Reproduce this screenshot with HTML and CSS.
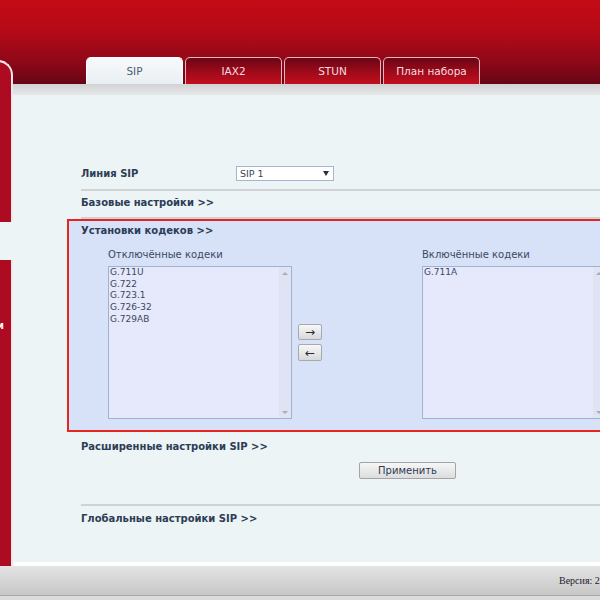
FILE: index.html
```html
<!DOCTYPE html>
<html lang="ru">
<head>
<meta charset="utf-8">
<title>SIP</title>
<link rel="stylesheet" href="styles.css">
</head>
<body>
<div class="page">
  <header class="top">
    <nav class="tabs">
      <div class="tab active">SIP</div>
      <div class="tab">IAX2</div>
      <div class="tab">STUN</div>
      <div class="tab">План набора</div>
    </nav>
  </header>
  <div class="main">
    <aside class="side">
      <div class="side-gap"></div>
      <div class="side-item active"></div>
      <div class="side-item text"><span>Сетевой режим</span></div>
    </aside>
    <div class="work">
      <div class="strip"></div>
      <div class="content">
        <div class="line-row">
          <span class="label">Линия SIP</span>
          <div class="select"><span>SIP 1</span><i class="caret"></i></div>
        </div>
        <div class="rule"></div>
        <div class="sect first">Базовые настройки &gt;&gt;</div>
        <div class="rule"></div>
        <section class="codecs">
          <div class="codecs-title">Установки кодеков &gt;&gt;</div>
          <div class="codec-grid">
            <div class="col-label left">Отключённые кодеки</div>
            <div class="col-label right">Включённые кодеки</div>
            <div class="listbox left">
              <div class="items">
                <div>G.711U</div>
                <div>G.722</div>
                <div>G.723.1</div>
                <div>G.726-32</div>
                <div>G.729AB</div>
              </div>
              <div class="sbar"><i class="up"></i><i class="down"></i></div>
            </div>
            <div class="arrows">
              <button class="arrow-btn">&#8594;</button>
              <button class="arrow-btn tall">&#8592;</button>
            </div>
            <div class="listbox right">
              <div class="items">
                <div>G.711A</div>
              </div>
              <div class="sbar"><i class="up"></i><i class="down"></i></div>
            </div>
          </div>
        </section>
        <div class="sect after">Расширенные настройки SIP &gt;&gt;</div>
        <button class="apply">Применить</button>
        <div class="rule"></div>
        <div class="sect last">Глобальные настройки SIP &gt;&gt;</div>
      </div>
    </div>
  </div>
  <footer class="foot"><span class="version">Версия: 2.0</span></footer>
  <div class="bottom"></div>
</div>
</body>
</html>
```

FILE: styles.css
```css
* { box-sizing: border-box; }
html, body { margin: 0; padding: 0; overflow: hidden; }
body {
  width: 600px;
  height: 600px;
  font-family: "DejaVu Sans", Verdana, sans-serif;
  background: #edf4f6;
}
.page { display: flex; flex-direction: column; height: 600px; }

/* header */
.top {
  flex: none;
  height: 84px;
  background: linear-gradient(#c40b15 0%, #b30a17 40%, #8c0818 75%, #650616 100%);
  display: flex;
  align-items: flex-end;
  padding-left: 86px;
}
.tabs { display: flex; gap: 2px; }
.tab {
  width: 97px;
  height: 27px;
  border: 1px solid #e8b4bd;
  border-bottom: none;
  border-radius: 5px 5px 0 0;
  display: flex;
  align-items: center;
  justify-content: center;
  font-size: 10.5px;
  color: #f6dde1;
  background: linear-gradient(#6a0615, #a00a1a 55%, #c20f1f);
}
.tab.active {
  background: linear-gradient(#f7fafb, #e9eff2);
  border-color: #ffffff;
  color: #4b5c74;
}

/* main */
.main { flex: none; height: 482px; display: flex; }
.side {
  flex: none;
  width: 33px;
  margin: -24px 0 0 -20px;
  background: #ad0b21;
  border-top: 2px solid #f3e6e9;
  border-right: 2px solid #f3e6e9;
  border-top-right-radius: 15px;
  display: flex;
  flex-direction: column;
}
.side-gap { height: 160px; flex: none; }
.side-item.active { height: 38px; background: #edf4f6; margin-right: -2px; flex: none; }
.side-item.text {
  padding: 59px 7px 0 0;
  display: flex;
  justify-content: flex-end;
  white-space: nowrap;
  font-size: 10px;
  line-height: 14px;
  font-weight: bold;
  color: #ffffff;
}

.work {
  flex: 1;
  display: flex;
  flex-direction: column;
  border-bottom: 4px solid #ffffff;
  min-width: 0;
}
.strip { flex: none; height: 11px; background: linear-gradient(#d1d2d3, #e6e8e9); }
.content { flex: 1; background: #edf4f6; padding: 63px 0 0 68px; }

.line-row { display: flex; align-items: center; padding: 8px 0; }
.label {
  width: 155px;
  font-weight: bold;
  font-size: 10px;
  color: #2c3d55;
}
.select {
  width: 98px;
  height: 15px;
  border: 1px solid #a4b6d2;
  background: #ffffff;
  font-size: 9.5px;
  color: #3a4658;
  display: flex;
  align-items: center;
  justify-content: space-between;
  padding: 0 4px 0 3px;
}
.caret {
  width: 0;
  height: 0;
  border-left: 3.5px solid transparent;
  border-right: 3.5px solid transparent;
  border-top: 5px solid #26303e;
}
.rule { height: 2px; background: #cfd3d5; }

.sect {
  font-weight: bold;
  font-size: 10px;
  line-height: 14px;
  color: #2c3d55;
}
.sect.first { padding: 5px 0 7px; }
.sect.after { padding: 8px 0 0; }
.sect.last { padding: 6px 0 0; }

/* codecs box */
.codecs {
  margin: 0 -20px 0 -14px;
  border: 2px solid #e52521;
  background: #d7e1f7;
  padding: 1px 0 11px 12px;
}
.codecs-title {
  font-weight: bold;
  font-size: 10px;
  line-height: 18px;
  color: #2c3d55;
}
.codec-grid {
  display: grid;
  grid-template-columns: 184px 130px 184px;
  grid-template-rows: 14px 153px;
  row-gap: 4px;
  margin: 8px 0 0 27px;
}
.col-label { font-size: 10px; line-height: 14px; color: #3a4a62; }
.col-label.left { grid-column: 1; grid-row: 1; }
.col-label.right { grid-column: 3; grid-row: 1; }
.listbox {
  border: 1px solid #9fb3d1;
  background: #e6e9fb;
  display: flex;
}
.listbox.left { grid-column: 1; grid-row: 2; }
.listbox.right { grid-column: 3; grid-row: 2; }
.items {
  flex: 1;
  padding: 0 1px;
  font-size: 9px;
  line-height: 11.7px;
  color: #3b485a;
}
.sbar {
  width: 12px;
  background: #e0e3f4;
  display: flex;
  flex-direction: column;
  justify-content: space-between;
  align-items: center;
  padding: 5px 0 4px;
}
.sbar .up, .sbar .down {
  width: 0;
  height: 0;
  border-left: 3px solid transparent;
  border-right: 3px solid transparent;
}
.sbar .up { border-bottom: 3px solid #a9adb9; }
.sbar .down { border-top: 3px solid #a9adb9; }

.arrows {
  grid-column: 2;
  grid-row: 2;
  align-self: center;
  margin-left: 6px;
  display: flex;
  flex-direction: column;
  gap: 4px;
}
.arrow-btn {
  width: 24px;
  height: 16px;
  padding: 0;
  border: 1px solid #a6a9ad;
  border-radius: 2px;
  background: linear-gradient(#f7f7f7, #d8d9db);
  font-family: "DejaVu Sans", sans-serif;
  font-size: 12px;
  line-height: 12px;
  color: #2a2a2a;
  display: flex;
  align-items: center;
  justify-content: center;
}
.arrow-btn.tall { height: 17px; }

.apply {
  display: block;
  margin: 8px 0 25px 278px;
  width: 97px;
  height: 17px;
  padding: 0;
  border: 1px solid #a2a4a7;
  border-radius: 2px;
  background: linear-gradient(#f6f6f6, #dcdddf);
  font-family: "DejaVu Sans", sans-serif;
  font-size: 10px;
  color: #2c3a50;
}

/* footer */
.foot {
  flex: none;
  height: 29px;
  background: linear-gradient(#e4e4e4, #c7c7c7);
  padding: 3px 0 0 559px;
  white-space: nowrap;
  overflow: hidden;
}
.version {
  font-family: "Liberation Serif", "Times New Roman", serif;
  font-size: 10px;
  line-height: 16px;
  color: #1c1c2e;
}
.bottom {
  flex: none;
  height: 5px;
  border-top: 1px solid #a9a9a9;
  background: #dcdcdc;
}
```
